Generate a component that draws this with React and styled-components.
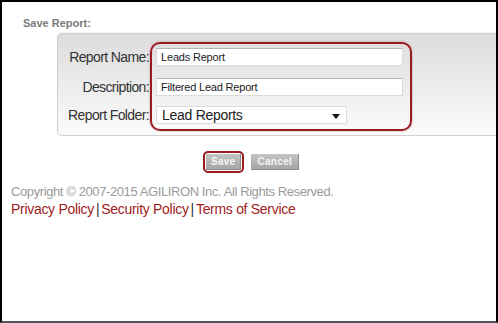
import React from 'react';
import styled, { createGlobalStyle } from 'styled-components';

const GlobalStyle = createGlobalStyle`
  html, body {
    margin: 0;
    padding: 0;
    background: #fff;
  }
  body {
    font-family: "Liberation Sans", Arial, sans-serif;
  }
`;

const Frame = styled.div`
  box-sizing: border-box;
  width: 498px;
  height: 323px;
  border: 2px solid #000;
  border-bottom-color: #4b5361;
  background: #fff;
  overflow: hidden;
`;

const Title = styled.div`
  padding: 13px 0 0 21px;
  height: 18px;
  font-size: 11px;
  font-weight: bold;
  color: #7a7a7a;
  line-height: 16px;
`;

const Panel = styled.div`
  display: flex;
  margin: 0 -8px 0 55px;
  padding: 8px 0 4px 10px;
  border: 1px solid #cfcfcf;
  border-radius: 5px;
  background: linear-gradient(to bottom, #dcdcdc 0%, #ececec 50%, #fbfbfb 100%);
  box-shadow: 0 -1px 0 #f4f4f4;
`;

const Labels = styled.div`
  display: flex;
  flex-direction: column;
  align-items: flex-end;
  padding-top: 6px;
  gap: 10px;
`;

const Label = styled.div`
  height: 18px;
  line-height: 19px;
  font-size: 14px;
  letter-spacing: -0.6px;
  color: #333;
  white-space: nowrap;
  margin-top: ${p => p.$offset || 0}px;
`;

const Highlight = styled.div`
  display: flex;
  flex-direction: column;
  gap: 12px;
  margin-left: 1px;
  padding: 4px 7px 5px 4px;
  border: 2px solid #9a1c20;
  border-radius: 10px;
  box-shadow: 0 0 2px rgba(154, 28, 32, 0.5);
`;

const TextInput = styled.div`
  box-sizing: border-box;
  width: 247px;
  height: 18px;
  padding: 0 4px;
  background: #fff;
  border: 1px solid #dcdcdc;
  border-top-color: #b4b4b4;
  font-size: 11px;
  line-height: 17px;
  color: #222;
  letter-spacing: -0.2px;
`;

const Select = styled.div`
  box-sizing: border-box;
  display: flex;
  align-items: center;
  justify-content: space-between;
  width: 191px;
  height: 18px;
  margin-top: -2px;
  padding: 0 6px 0 5px;
  background: #fff;
  border: 1px solid #dcdcdc;
  font-size: 14px;
  letter-spacing: -0.3px;
  color: #222;
`;

const Caret = styled.span`
  width: 0;
  height: 0;
  border-left: 4px solid transparent;
  border-right: 4px solid transparent;
  border-top: 5px solid #111;
  margin-top: 2px;
`;

const ButtonRow = styled.div`
  display: flex;
  justify-content: center;
  align-items: center;
  gap: 7px;
  margin-top: 15px;
  padding-left: 4px;
`;

const Ring = styled.div`
  padding: 1px 1px;
  border: 2px solid #9a1c20;
  border-radius: 5px;
`;

const Button = styled.div`
  box-sizing: border-box;
  height: 16px;
  padding: 0 ${p => p.$pad}px;
  background: linear-gradient(to bottom, #c4c4c4 0%, #a6a6a6 100%);
  border-right: 1px solid #8c8c8c;
  border-bottom: 1px solid #8c8c8c;
  font-size: 10px;
  font-weight: bold;
  line-height: 16px;
  color: #f4f4f4;
  letter-spacing: 0.3px;
`;

const Footer = styled.div`
  padding: 11px 0 0 9px;
`;

const Copyright = styled.div`
  font-size: 13px;
  line-height: 15px;
  letter-spacing: -0.4px;
  color: #9b9b9b;
`;

const Links = styled.div`
  margin-top: 2px;
  font-size: 14px;
  line-height: 16px;
  letter-spacing: -0.3px;
  color: #a01c22;
`;

const Sep = styled.span`
  color: #333;
  margin: 0 2px;
`;

export default function App() {
  return (
    <>
      <GlobalStyle />
      <Frame>
        <Title>Save Report:</Title>
        <Panel>
          <Labels>
            <Label>Report Name:</Label>
            <Label $offset={2}>Description:</Label>
            <Label>Report Folder:</Label>
          </Labels>
          <Highlight>
            <TextInput>Leads Report</TextInput>
            <TextInput>Filtered Lead Report</TextInput>
            <Select>
              <span>Lead Reports</span>
              <Caret />
            </Select>
          </Highlight>
        </Panel>
        <ButtonRow>
          <Ring>
            <Button $pad={5}>Save</Button>
          </Ring>
          <Button $pad={6}>Cancel</Button>
        </ButtonRow>
        <Footer>
          <Copyright>Copyright © 2007-2015 AGILIRON Inc. All Rights Reserved.</Copyright>
          <Links>
            Privacy Policy<Sep>|</Sep>Security Policy<Sep>|</Sep>Terms of Service
          </Links>
        </Footer>
      </Frame>
    </>
  );
}
